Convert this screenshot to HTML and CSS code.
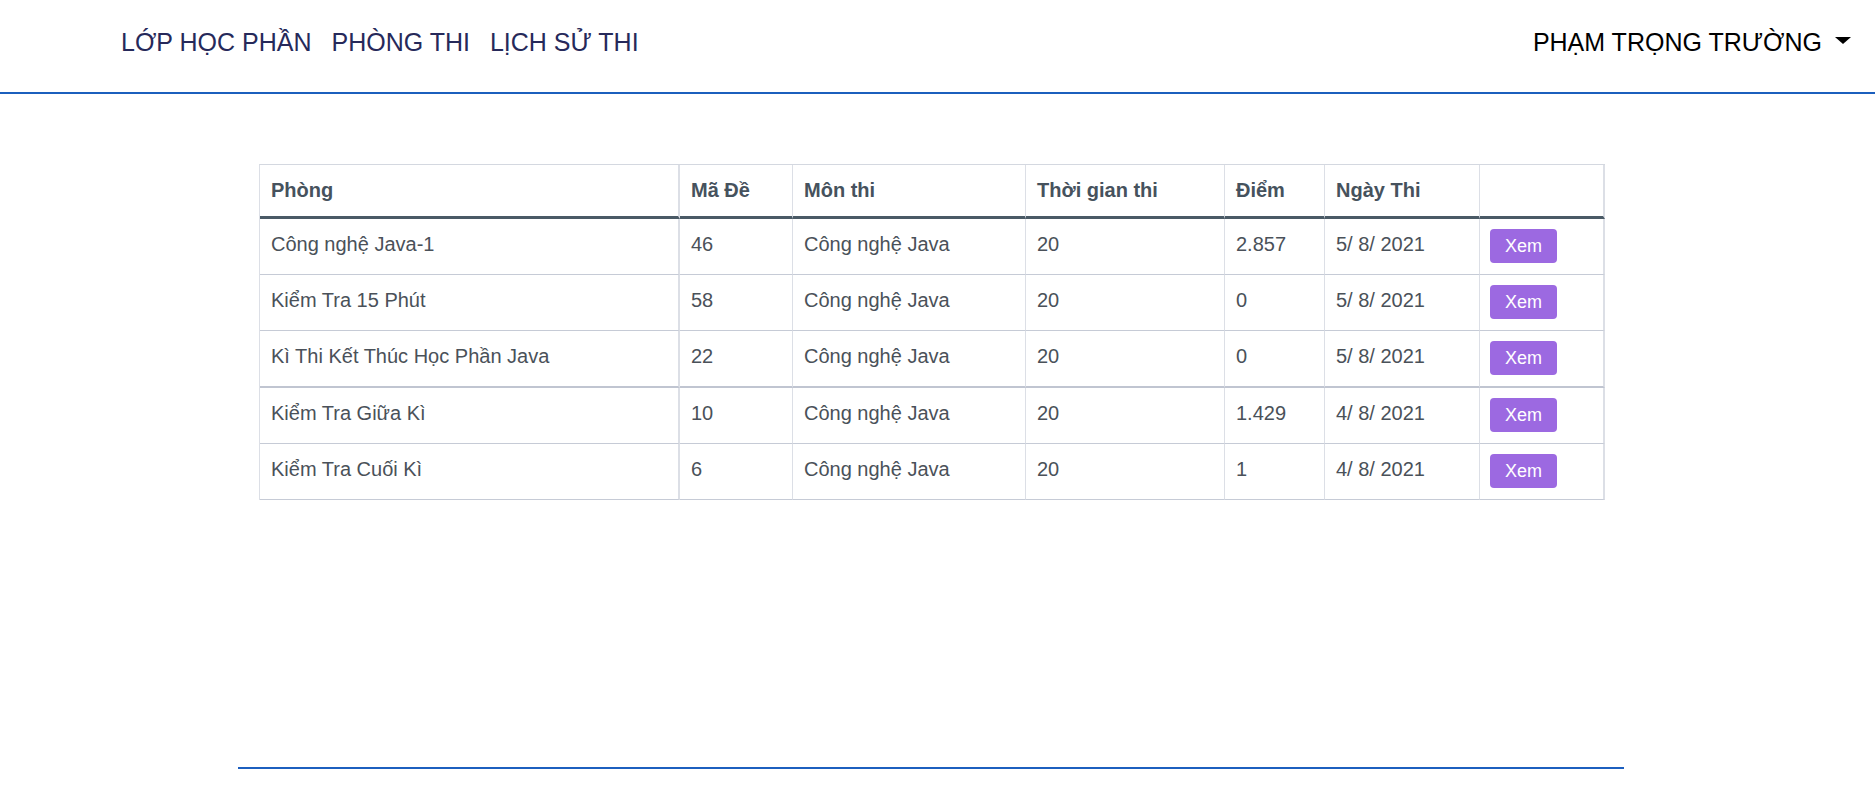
FILE: index.html
```html
<!DOCTYPE html>
<html lang="vi">
<head>
<meta charset="utf-8">
<title>Lịch sử thi</title>
<link rel="stylesheet" href="styles.css">
</head>
<body>
<header class="topbar">
  <nav class="nav">
    <a class="nav-link" href="#">LỚP HỌC PHẦN</a>
    <a class="nav-link" href="#">PHÒNG THI</a>
    <a class="nav-link" href="#">LỊCH SỬ THI</a>
  </nav>
  <div class="user">
    <span class="user-name">PHẠM TRỌNG TRƯỜNG</span>
    <span class="caret"></span>
  </div>
</header>
<main class="container">
  <table class="history">
    <thead>
      <tr>
        <th class="c1">Phòng</th>
        <th class="c2">Mã Đề</th>
        <th class="c3">Môn thi</th>
        <th class="c4">Thời gian thi</th>
        <th class="c5">Điểm</th>
        <th class="c6">Ngày Thi</th>
        <th class="c7"></th>
      </tr>
    </thead>
    <tbody>
      <tr>
        <td class="c1">Công nghệ Java-1</td>
        <td class="c2">46</td>
        <td>Công nghệ Java</td>
        <td>20</td>
        <td>2.857</td>
        <td>5/ 8/ 2021</td>
        <td class="c7"><a class="btn" href="#">Xem</a></td>
      </tr>
      <tr>
        <td class="c1">Kiểm Tra 15 Phút</td>
        <td class="c2">58</td>
        <td>Công nghệ Java</td>
        <td>20</td>
        <td>0</td>
        <td>5/ 8/ 2021</td>
        <td class="c7"><a class="btn" href="#">Xem</a></td>
      </tr>
      <tr class="group-end">
        <td class="c1">Kì Thi Kết Thúc Học Phần Java</td>
        <td class="c2">22</td>
        <td>Công nghệ Java</td>
        <td>20</td>
        <td>0</td>
        <td>5/ 8/ 2021</td>
        <td class="c7"><a class="btn" href="#">Xem</a></td>
      </tr>
      <tr>
        <td class="c1">Kiểm Tra Giữa Kì</td>
        <td class="c2">10</td>
        <td>Công nghệ Java</td>
        <td>20</td>
        <td>1.429</td>
        <td>4/ 8/ 2021</td>
        <td class="c7"><a class="btn" href="#">Xem</a></td>
      </tr>
      <tr>
        <td class="c1">Kiểm Tra Cuối Kì</td>
        <td class="c2">6</td>
        <td>Công nghệ Java</td>
        <td>20</td>
        <td>1</td>
        <td>4/ 8/ 2021</td>
        <td class="c7"><a class="btn" href="#">Xem</a></td>
      </tr>
    </tbody>
  </table>
  <hr class="footer-line">
</main>
</body>
</html>
```

FILE: styles.css
```css
* { box-sizing: border-box; }

html, body {
  margin: 0;
  padding: 0;
  background: #ffffff;
  font-family: "Liberation Sans", Arial, sans-serif;
}

.topbar {
  display: flex;
  align-items: flex-start;
  height: 94px;
  padding: 27px 24px 0 121px;
  border-bottom: 2px solid #1b5fbd;
}

.nav {
  display: flex;
  gap: 20px;
}

.nav-link {
  font-size: 25px;
  line-height: 30px;
  color: #26295a;
  text-decoration: none;
}

.user {
  margin-left: auto;
  display: flex;
  align-items: flex-start;
}

.user-name {
  font-size: 25px;
  line-height: 30px;
  color: #000000;
}

.caret {
  width: 0;
  height: 0;
  margin-top: 10px;
  margin-left: 13px;
  border-top: 7px solid #000000;
  border-left: 8px solid transparent;
  border-right: 8px solid transparent;
}

.container {
  width: 1386px;
  margin-left: 238px;
  padding: 70px 21px 0 21px;
}

.history {
  table-layout: fixed;
  width: 1346px;
  border-collapse: separate;
  border-spacing: 0;
  border-left: 1px solid #dcdfe6;
  border-top: 1px solid #d4d8e0;
  color: #4a5159;
  font-size: 20px;
}

.history th,
.history td {
  text-align: left;
  vertical-align: top;
  border-right: 1px solid #dcdfe6;
  padding: 10px 12px 0 11px;
  line-height: 30px;
  white-space: nowrap;
}

.history th {
  height: 54px;
  padding-top: 10px;
  padding-bottom: 11px;
  font-weight: bold;
  color: #46525d;
  border-bottom: 3px solid #4a5a66;
}

.history td {
  height: 56px;
  border-bottom: 1px solid #c6cbd6;
}

.history .group-end td {
  height: 57px;
  border-bottom: 2px solid #c0c5d1;
}

.history .c1 { width: 420px; border-right-width: 2px; }
.history .c2 { width: 113px; }
.history .c3 { width: 233px; }
.history .c4 { width: 199px; }
.history .c5 { width: 100px; }
.history .c6 { width: 155px; }
.history .c7 { width: 125px; border-right-width: 2px; }

.history td.c7 {
  padding-left: 10px;
  padding-top: 10px;
}

.btn {
  display: block;
  width: 67px;
  height: 34px;
  border-radius: 4px;
  background: #9c69e1;
  color: #ffffff;
  font-size: 18px;
  line-height: 35px;
  text-align: center;
  text-decoration: none;
}

.footer-line {
  margin: 267px 0 0 -21px;
  width: 1386px;
  height: 0;
  border: 0;
  border-top: 2px solid #1c5fbf;
}
```
